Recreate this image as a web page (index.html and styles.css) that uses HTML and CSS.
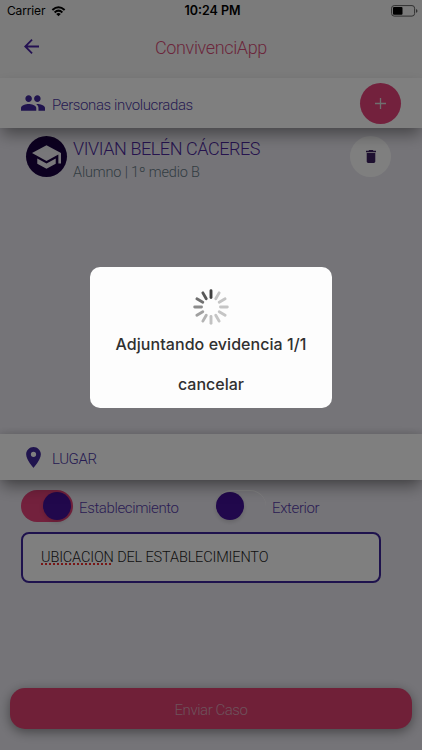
FILE: index.html
```html
<!DOCTYPE html>
<html lang="es">
<head>
<meta charset="utf-8">
<title>ConvivenciApp</title>
<link rel="stylesheet" href="styles.css">
</head>
<body>
<div class="app">
  <header class="top">
    <div class="status">
      <div class="carrier"><span class="carrier-name">Carrier</span>
        <svg class="wifi" viewBox="0 0 16 12"><path fill="none" stroke="#000" stroke-width="2.200" d="M1.300 4.300Q8-1.700 14.700 4.300M3.800 7Q8 3.200 12.200 7"/><path d="M8 11.200 5.500 8.700Q8 6.700 10.500 8.700Z"/></svg>
      </div>
      <span class="time">10:24 PM</span>
      <svg class="battery" viewBox="0 0 27 12"><rect x=".6" y=".6" width="23" height="10.500" rx="2.600" fill="none" stroke="#606060"/><rect x="2" y="2" width="9.500" height="7.700" rx="1"/><path fill="#606060" d="M25 4q1.500.4 1.500 1.900T25 7.800z"/></svg>
    </div>
    <div class="navbar">
      <svg class="back" viewBox="4 4 16 16"><path fill="none" stroke="#4822a4" stroke-width="1.900" d="M20 12H5.500M12.600 4.700 5.300 12l7.300 7.300"/></svg>
      <h1 class="title">ConvivenciApp</h1>
    </div>
  </header>
  <section class="bar people">
    <svg class="people-icon" viewBox="1 5 22 14"><path fill="#40289c" d="M16 11c1.660 0 2.990-1.340 2.990-3S17.660 5 16 5s-3 1.340-3 3 1.340 3 3 3zm-8 0c1.660 0 2.990-1.340 2.990-3S9.660 5 8 5 5 6.340 5 8s1.340 3 3 3zm0 2c-2.330 0-7 1.170-7 3.500V19h14v-2.500c0-2.330-4.670-3.500-7-3.500zm8 0c-.29 0-.62.020-.97.050 1.160.84 1.970 1.970 1.970 3.450V19h6v-2.500c0-2.330-4.670-3.500-7-3.500z"/></svg>
    <span class="bar-label">Personas involucradas</span>
    <div class="add"><svg class="plus" viewBox="0 0 11 11"><path fill="none" stroke="#dedede" stroke-width="1.300" d="M5.500 0v11M0 5.500h11"/></svg></div>
  </section>
  <main class="list">
    <div class="person">
      <div class="avatar"><svg class="cap" viewBox="1 3 22 18"><path fill="#f0eff4" d="M5 13.180v4L12 21l7-3.820v-4L12 17l-7-3.820zM12 3 1 9l11 6 9-4.910V17h2V9L12 3z"/></svg></div>
      <div class="person-text"><div class="name">VIVIAN BELÉN CÁCERES</div><div class="role">Alumno | 1º medio B</div></div>
      <div class="delete"><svg class="trash" viewBox="5 3 14 18"><path fill="#3c2060" d="M6 19c0 1.100.9 2 2 2h8c1.100 0 2-.9 2-2V7H6v12zM19 4h-3.500l-1-1h-5l-1 1H5v2h14V4z"/></svg></div>
    </div>
  </main>
  <section class="bar place">
    <svg class="pin" viewBox="5 2 14 20"><path fill="#40289c" d="M12 2C8.130 2 5 5.130 5 9c0 5.250 7 13 7 13s7-7.750 7-13c0-3.870-3.130-7-7-7zm0 9.500A2.500 2.500 0 1 1 12 6.500a2.500 2.500 0 0 1 0 5z"/></svg>
    <span class="bar-label">LUGAR</span>
  </section>
  <section class="form">
    <div class="toggles">
      <div class="switch on"><div class="knob"></div></div><span class="toggle-label first">Establecimiento</span>
      <div class="switch off"><div class="knob"></div></div><span class="toggle-label">Exterior</span>
    </div>
    <div class="input"><span class="input-text"><span class="misspelled">UBICACION</span> DEL ESTABLECIMIENTO</span></div>
  </section>
  <footer class="footer"><div class="send"><span class="send-text">Enviar Caso</span></div></footer>
</div>
<div class="overlay">
  <div class="dialog">
    <svg class="spinner" viewBox="-18 -18 36 36" stroke-width="2.900" stroke-linecap="round">
      <path stroke="#404040" d="M0-9.500V-16.300"/>
      <path stroke="#c5c5c5" transform="rotate(30)" d="M0-9.500V-16.300"/>
      <path stroke="#c5c5c5" transform="rotate(60)" d="M0-9.500V-16.300"/>
      <path stroke="#c5c5c5" transform="rotate(90)" d="M0-9.500V-16.300"/>
      <path stroke="#c5c5c5" transform="rotate(120)" d="M0-9.500V-16.300"/>
      <path stroke="#c5c5c5" transform="rotate(150)" d="M0-9.500V-16.300"/>
      <path stroke="#c2c2c2" transform="rotate(180)" d="M0-9.500V-16.300"/>
      <path stroke="#b4b4b4" transform="rotate(210)" d="M0-9.500V-16.300"/>
      <path stroke="#a0a0a0" transform="rotate(240)" d="M0-9.500V-16.300"/>
      <path stroke="#8c8c8c" transform="rotate(270)" d="M0-9.500V-16.300"/>
      <path stroke="#707070" transform="rotate(300)" d="M0-9.500V-16.300"/>
      <path stroke="#585858" transform="rotate(330)" d="M0-9.500V-16.300"/>
    </svg>
    <div class="message">Adjuntando evidencia 1/1</div>
    <div class="cancel">cancelar</div>
  </div>
</div>
</body>
</html>
```
FILE: styles.css
```css
* { box-sizing: border-box; }
body { margin: 0; width: 422px; height: 750px; overflow: hidden; font-family: Roboto, sans-serif; font-weight: 300; }
svg { display: block; flex: none; }
.app { height: 750px; display: flex; flex-direction: column; background: #ebe9f1; color: #4c38a4; white-space: nowrap; }
.top { height: 78px; background: #f7f7f7; }
.status { height: 22px; display: grid; grid-template-columns: 1fr auto 1fr; align-items: center; padding: 0 4px 0 7px; font: 400 12px/22px Inter, sans-serif; color: #000; }
.carrier { display: flex; align-items: center; gap: 6px; }
.carrier-name { letter-spacing: -.15px; }
.wifi { width: 15px; height: 11px; }
.time { font-weight: 600; font-size: 12.500px; }
.battery { width: 27px; height: 12px; justify-self: end; }
.navbar { display: grid; grid-template-columns: 60px 1fr 60px; height: 51px; align-items: center; }
.back { width: 15px; height: 15px; margin-left: 24px; margin-top: -3px; }
.title { margin: 0; text-align: center; font-size: 18px; letter-spacing: -.36px; font-weight: 300; color: #d84c78; }
.bar { position: relative; display: flex; align-items: center; background: #fff; box-shadow: 0 8px 16px -2px rgba(0, 0, 0, .42); flex: none; }
.people { height: 50px; padding: 0 21px; }
.people-icon { width: 24px; height: 16px; margin-right: 7px; }
.bar-label { font-size: 15px; letter-spacing: -.38px; padding-top: 3px; }
.add { margin-left: auto; width: 41px; height: 41px; border-radius: 50%; background: #e6427a; display: flex; align-items: center; justify-content: center; }
.plus { width: 11px; height: 11px; }
.list { height: 306px; padding: 8px 31px 0 26px; }
.person { display: flex; }
.avatar { width: 41px; height: 41px; border-radius: 50%; background: #180040; display: flex; align-items: center; justify-content: center; }
.cap { width: 29px; height: 24px; }
.person-text { margin-left: 6px; }
.name { font-size: 18px; letter-spacing: -.43px; line-height: 26px; color: #4c289c; }
.role { font-size: 14.500px; letter-spacing: -.16px; line-height: 22px; color: #657985; }
.delete { margin-left: auto; width: 41px; height: 41px; border-radius: 50%; background: #fff; display: flex; align-items: center; justify-content: center; }
.trash { width: 10px; height: 13px; }
.place { height: 46px; padding: 0 26px; box-shadow: 0 8px 16px -2px rgba(0, 0, 0, .42), 0 -1px 8px rgba(0, 0, 0, .12); }
.pin { width: 15px; height: 21px; margin-right: 11px; }
.form { padding: 10px 21px 0; }
.toggles { display: flex; height: 32px; }
.switch { width: 52px; height: 32px; border-radius: 16px; padding: 2px; }
.on { background: #e6427a; display: flex; justify-content: flex-end; }
.off { border-top: 1px solid #fff; padding-top: 1px; padding-left: 0; width: 50px; background: #ebe9f1; }
.knob { width: 28px; height: 28px; border-radius: 50%; background: #421098; box-shadow: 0 2px 4px rgba(0, 0, 0, .15); }
.toggle-label { font-size: 15px; letter-spacing: -.38px; line-height: 37px; margin-left: 6px; color: #563ba8; }
.first { width: 137px; }
.input { width: 360px; height: 51px; margin-top: 10px; border: 2px solid #3d249b; border-radius: 8px; background: #fff; padding: 0 18px; color: #242424; font-size: 14.500px; letter-spacing: -.15px; line-height: 48px; }
.misspelled { text-decoration: underline dotted #f02d2d 2px; text-underline-offset: 1px; text-decoration-skip-ink: none; }
.footer { margin-top: auto; padding: 0 10px 21px; }
.send { height: 41px; border-radius: 15px; background: #e04070; box-shadow: 0 3px 12px rgba(0, 0, 0, .42); text-align: center; font-size: 15px; letter-spacing: -.45px; line-height: 45px; color: #dda3b8; }
.overlay { position: absolute; top: 0; left: 0; width: 422px; height: 750px; background: rgba(0, 0, 0, .5); display: flex; align-items: flex-start; justify-content: center; padding-top: 267px; }
.dialog { width: 242px; height: 141px; border-radius: 10px; background: #fdfdfd; display: flex; flex-direction: column; align-items: center; padding-top: 22px; font: 500 16px/20px Inter, sans-serif; color: #303030; white-space: nowrap; }
.spinner { width: 36px; height: 36px; fill: none; }
.message { margin-top: 9px; letter-spacing: .06px; }
.cancel { margin-top: 20px; }
```
